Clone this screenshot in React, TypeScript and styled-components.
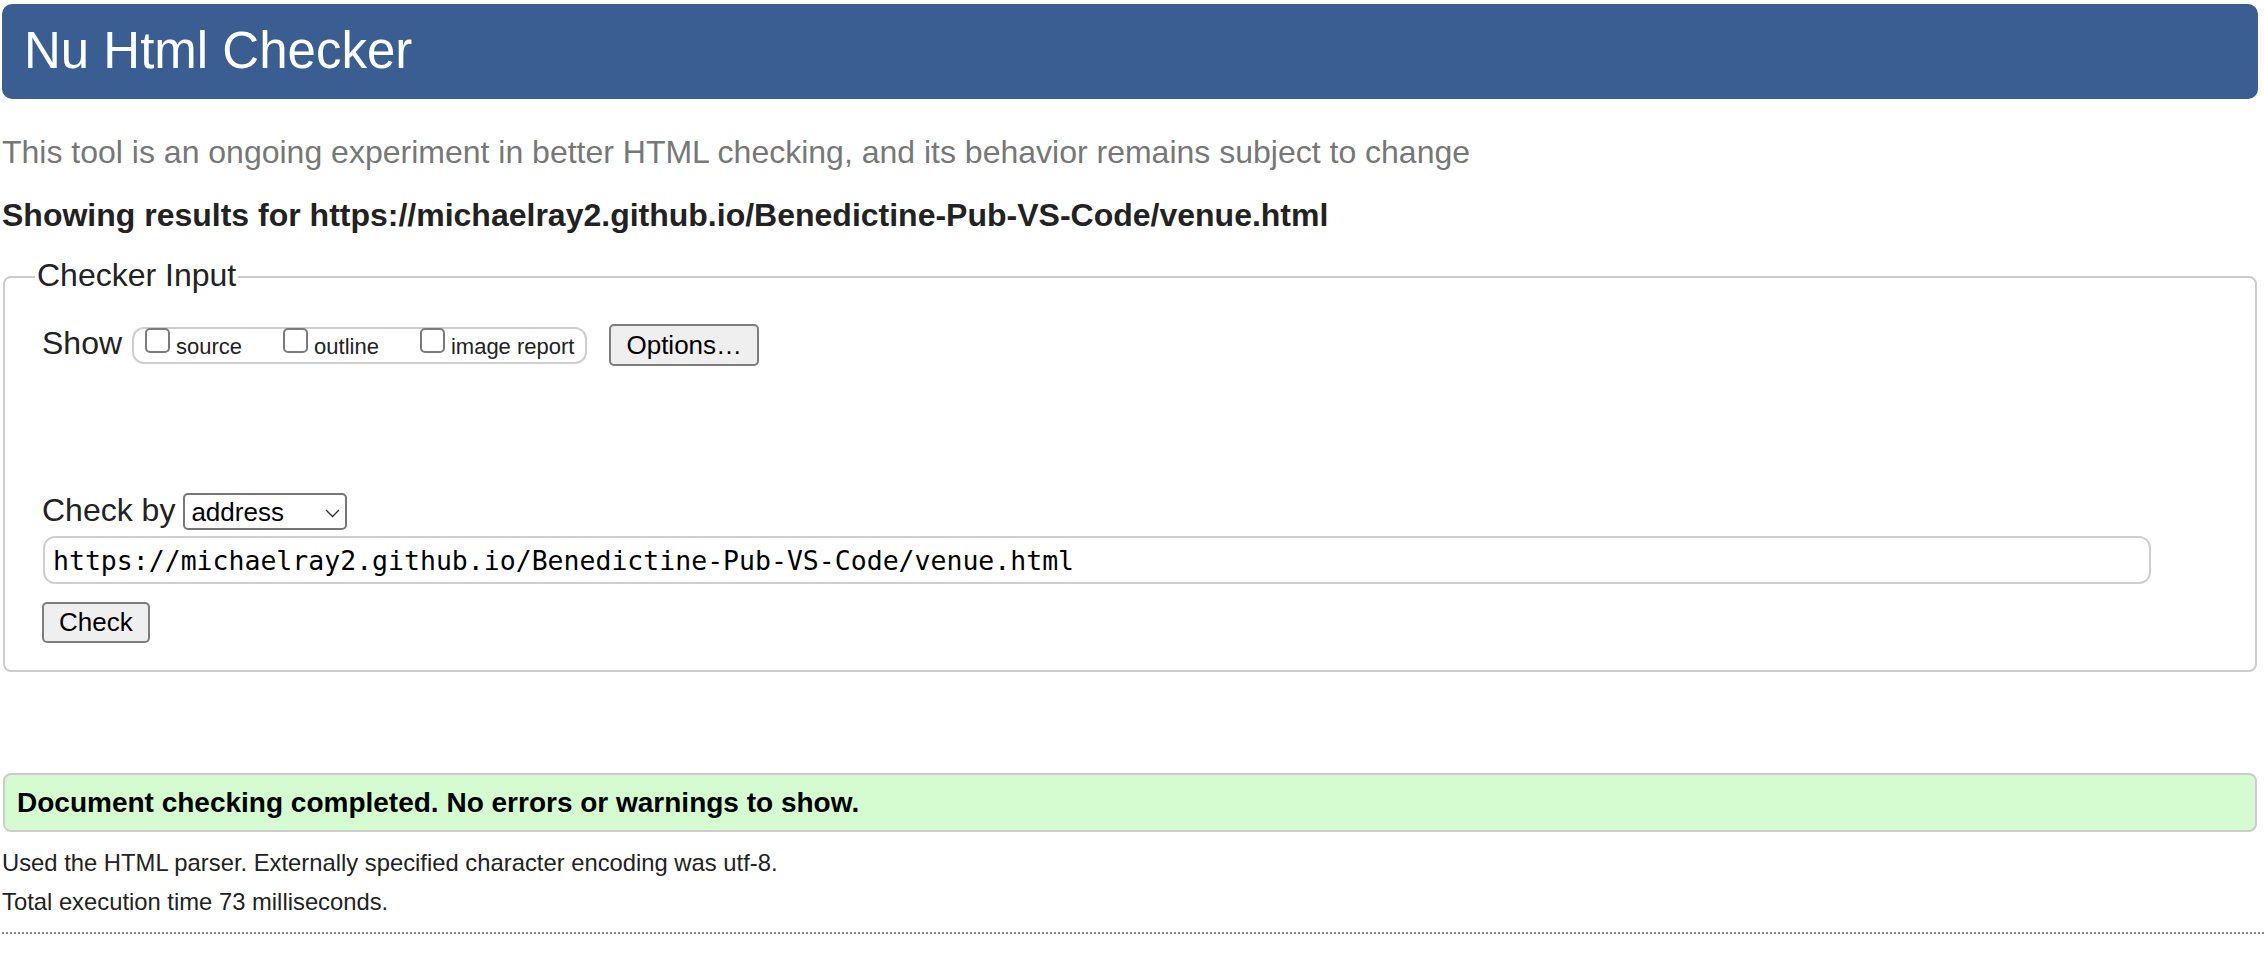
import React from "react";
import styled, { createGlobalStyle } from "styled-components";

const GlobalStyle = createGlobalStyle`
  html, body { margin: 0; padding: 0; background: #ffffff; }
  body {
    font-family: "Liberation Sans", Arial, Helvetica, sans-serif;
    color: #222222;
  }
  * { box-sizing: border-box; }
`;

const Page = styled.div`
  padding: 4px 0 0 2px;
`;

const Header = styled.header`
  margin: 0 6px 0 0;
  height: 95px;
  padding: 0 0 2px 22px;
  background: #3a5e91;
  border-radius: 10px;
`;

const Title = styled.h1`
  margin: 0;
  font-size: 51px;
  font-weight: normal;
  line-height: 93px;
  color: #ffffff;
`;

const Intro = styled.p`
  margin: 35px 0 0;
  font-size: 32px;
  line-height: 36px;
  color: #777777;
`;

const ResultsHeading = styled.h2`
  margin: 27px 0 0;
  font-size: 32px;
  font-weight: bold;
  line-height: 36px;
  color: #222222;
`;

const Fieldset = styled.fieldset`
  margin: 24px 7px 0 1px;
  border: 2px solid #cccccc;
  border-radius: 8px;
  padding: 27px 0 27px 30px;
  min-width: 0;
`;

const Legend = styled.legend`
  padding: 0 2px 4px;
  font-size: 32px;
  line-height: 36px;
  color: #222222;
`;

const Row = styled.div<{ $mt: number }>`
  display: flex;
  align-items: flex-start;
  margin: ${(p) => p.$mt}px 0 0 7px;
`;

const FieldLabel = styled.span<{ $mt?: number }>`
  font-size: 32px;
  line-height: 36px;
  margin-top: ${(p) => p.$mt ?? 0}px;
  color: #222222;
`;

const Pill = styled.div`
  display: flex;
  align-items: flex-start;
  gap: 41px;
  height: 37px;
  margin: 3px 0 0 10px;
  padding: 0 11px;
  border: 2px solid #cfcfcf;
  border-radius: 12px;
`;

const Option = styled.label`
  display: flex;
  align-items: flex-start;
  gap: 6px;
`;

const Checkbox = styled.input`
  appearance: none;
  -webkit-appearance: none;
  width: 25px;
  height: 25px;
  margin: -1px 0 0;
  border: 2px solid #7a7a7a;
  border-radius: 5px;
  background: #ffffff;
`;

const OptionText = styled.span`
  font-size: 22px;
  line-height: 26px;
  margin-top: 5px;
  color: #222222;
`;

const Button = styled.button<{ $ml: number; $h: number }>`
  height: ${(p) => p.$h}px;
  margin-left: ${(p) => p.$ml}px;
  padding: 0 15px;
  border: 2px solid #7d7d7d;
  border-radius: 5px;
  background: #efefef;
  font-family: "Liberation Sans", Arial, sans-serif;
  font-size: 26px;
  color: #000000;
`;

const SelectWrap = styled.div`
  position: relative;
  margin: 1px 0 0 8px;
`;

const Select = styled.select`
  appearance: none;
  -webkit-appearance: none;
  display: block;
  width: 164px;
  height: 37px;
  padding: 0 0 0 6px;
  border: 2px solid #767676;
  border-radius: 5px;
  background: #ffffff;
  font-family: "Liberation Sans", Arial, sans-serif;
  font-size: 26px;
  color: #000000;
`;

const Chevron = styled.svg`
  position: absolute;
  right: 7px;
  top: 16px;
  width: 15px;
  height: 9px;
  pointer-events: none;
`;

const UrlInput = styled.input`
  display: block;
  width: 2108px;
  height: 48px;
  margin: 6px 0 0 8px;
  padding: 0 8px;
  border: 2px solid #cfcfcf;
  border-radius: 12px;
  font-family: "DejaVu Sans Mono", "Liberation Mono", monospace;
  font-size: 26.5px;
  color: #000000;
  background: #ffffff;
`;

const Status = styled.div`
  margin: 101px 7px 0 1px;
  height: 59px;
  padding: 0 12px;
  border: 2px solid #cccccc;
  border-radius: 8px;
  background: #d4fcd0;
  font-size: 28px;
  font-weight: bold;
  line-height: 55px;
  color: #000000;
`;

const Info = styled.p<{ $mt: number }>`
  margin: ${(p) => p.$mt}px 0 0;
  font-size: 23.8px;
  line-height: 27px;
  color: #222222;
`;

const Rule = styled.hr`
  margin: 17px 0 0;
  border: 0;
  border-top: 2px dotted #888888;
  height: 0;
`;

const URL = "https://michaelray2.github.io/Benedictine-Pub-VS-Code/venue.html";

export default function App() {
  return (
    <>
      <GlobalStyle />
      <Page>
        <Header>
          <Title>Nu Html Checker</Title>
        </Header>
        <Intro>
          This tool is an ongoing experiment in better HTML checking, and its behavior remains subject to change
        </Intro>
        <ResultsHeading>Showing results for {URL}</ResultsHeading>
        <Fieldset>
          <Legend>Checker Input</Legend>
          <Row $mt={0}>
            <FieldLabel $mt={1}>Show</FieldLabel>
            <Pill>
              <Option>
                <Checkbox type="checkbox" />
                <OptionText>source</OptionText>
              </Option>
              <Option>
                <Checkbox type="checkbox" />
                <OptionText>outline</OptionText>
              </Option>
              <Option>
                <Checkbox type="checkbox" />
                <OptionText>image report</OptionText>
              </Option>
            </Pill>
            <Button type="button" $ml={22} $h={42}>Options…</Button>
          </Row>
          <Row $mt={126}>
            <FieldLabel>Check by</FieldLabel>
            <SelectWrap>
              <Select defaultValue="address">
                <option value="address">address</option>
                <option value="file">file upload</option>
                <option value="text">text input</option>
              </Select>
              <Chevron viewBox="0 0 15 9">
                <path d="M1 1 L7.5 7.5 L14 1" fill="none" stroke="#333" strokeWidth="1.4" />
              </Chevron>
            </SelectWrap>
          </Row>
          <UrlInput type="url" value={URL} readOnly />
          <Row $mt={18}>
            <Button type="button" $ml={0} $h={41}>Check</Button>
          </Row>
        </Fieldset>
        <Status>Document checking completed. No errors or warnings to show.</Status>
        <Info $mt={17}>Used the HTML parser. Externally specified character encoding was utf-8.</Info>
        <Info $mt={12}>Total execution time 73 milliseconds.</Info>
        <Rule />
      </Page>
    </>
  );
}
